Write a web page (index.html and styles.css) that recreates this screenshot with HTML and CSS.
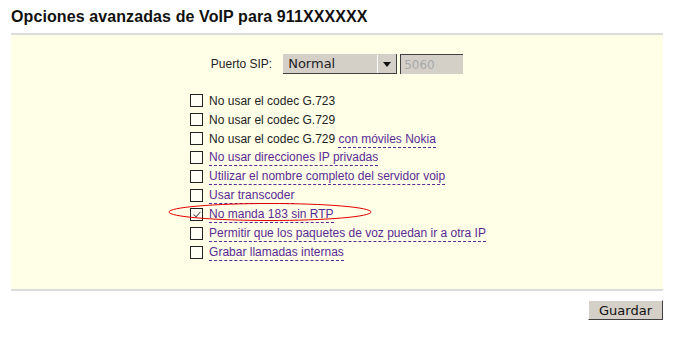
FILE: index.html
```html
<!DOCTYPE html>
<html lang="es">
<head>
    <meta charset="UTF-8">
    <title>Opciones avanzadas de VoIP</title>
    <link rel="stylesheet" href="styles.css">
</head>
<body>
    <h1>Opciones avanzadas de VoIP para 911XXXXXX</h1>

    <div class="panel">
        <div class="sip-row">
            <label for="sipPort">Puerto SIP:</label>
            <div class="select">
                <span class="select-value">Normal</span>
                <span class="select-arrow"></span>
            </div>
            <input type="text" id="sipPort" class="port-input" value="5060" disabled>
        </div>

        <div class="options-wrap">
            <ul class="options">
                <li><input type="checkbox" class="chk"><span>No usar el codec G.723</span></li>
                <li><input type="checkbox" class="chk"><span>No usar el codec G.729</span></li>
                <li><input type="checkbox" class="chk"><span>No usar el codec G.729 <a class="help">con móviles Nokia</a></span></li>
                <li><input type="checkbox" class="chk"><a class="help">No usar direcciones IP privadas</a></li>
                <li><input type="checkbox" class="chk"><a class="help">Utilizar el nombre completo del servidor voip</a></li>
                <li><input type="checkbox" class="chk"><a class="help">Usar transcoder</a></li>
                <li><input type="checkbox" class="chk" checked><a class="help">No manda 183 sin RTP</a></li>
                <li><input type="checkbox" class="chk"><a class="help">Permitir que los paquetes de voz puedan ir a otra IP</a></li>
                <li><input type="checkbox" class="chk"><a class="help">Grabar llamadas internas</a></li>
            </ul>
        </div>

        <svg class="mark" width="206" height="20" viewBox="0 0 206 20">
            <ellipse cx="103" cy="10" rx="101" ry="8.5" fill="none" stroke="#e00000" stroke-width="1"/>
        </svg>
    </div>

    <div class="actions">
        <button class="save-btn">Guardar</button>
    </div>
</body>
</html>
```

FILE: styles.css
```css
body {
    margin: 0;
    padding: 8px 0 0 11px;
    font-family: "Liberation Sans", Arial, sans-serif;
    font-size: 12px;
    color: #222;
    background-color: #fff;
}

h1 {
    margin: 0;
    font-size: 16px;
    font-weight: bold;
    color: #111;
    line-height: 18px;
    letter-spacing: 0.1px;
}

.panel {
    position: relative;
    width: 652px;
    margin-top: 7px;
    padding: 19px 0 27px;
    background-color: #ffffe8;
    border-top: 2px solid #dcdcdc;
    border-bottom: 2px solid #dcdcdc;
}

.sip-row {
    display: flex;
    align-items: center;
    justify-content: center;
    height: 20px;
}

.sip-row label {
    margin-right: 11px;
    font-size: 12px;
}

.select {
    display: flex;
    align-items: center;
    width: 114px;
    height: 20px;
    box-sizing: border-box;
    background-color: #d4d0c8;
    border-bottom: 1px solid #404040;
    border-right: 1px solid #404040;
    font-family: "DejaVu Sans", sans-serif;
    font-size: 13px;
    color: #222;
}

.select-value {
    flex: 1;
    padding-left: 5px;
}

.select-arrow {
    position: relative;
    width: 19px;
    height: 18px;
    border-left: 1px solid #fff;
    box-sizing: border-box;
}

.select-arrow::after {
    content: "";
    position: absolute;
    left: 5px;
    top: 7px;
    border-left: 4px solid transparent;
    border-right: 4px solid transparent;
    border-top: 5px solid #111;
}

.port-input {
    width: 63px;
    height: 20px;
    box-sizing: border-box;
    margin: 0 0 0 3px;
    padding: 0 3px;
    border: none;
    border-top: 1px solid #404040;
    border-left: 1px solid #404040;
    background-color: #d4d0c8;
    font-family: "DejaVu Sans", sans-serif;
    font-size: 12px;
    color: #a8a8a8;
}

.options-wrap {
    display: flex;
    justify-content: center;
    margin-top: 17px;
    padding-left: 2px;
}

.options {
    list-style: none;
    margin: 0;
    padding: 0;
}

.options li {
    display: flex;
    align-items: center;
    height: 19px;
}

.chk {
    appearance: none;
    -webkit-appearance: none;
    position: relative;
    width: 13px;
    height: 13px;
    margin: 0 6px 0 0;
    box-sizing: border-box;
    border: 1px solid #222;
    background-color: #fffff6;
}

.chk:checked::after {
    content: "";
    position: absolute;
    left: 4px;
    top: 1px;
    width: 3px;
    height: 6px;
    border-right: 1px solid #555;
    border-bottom: 1px solid #555;
    transform: rotate(40deg);
}

.help {
    color: #5a2a94;
    text-decoration: none;
    border-bottom: 1px dashed #5a2a94;
    padding-bottom: 1px;
}

.mark {
    position: absolute;
    left: 156px;
    top: 167px;
}

.actions {
    display: flex;
    justify-content: flex-end;
    width: 652px;
    margin-top: 9px;
}

.save-btn {
    height: 20px;
    width: 75px;
    padding: 0;
    font-family: "DejaVu Sans", sans-serif;
    font-size: 13px;
    color: #111;
    background-color: #d4d0c8;
    border: none;
    border-top: 1px solid #fff;
    border-left: 1px solid #fff;
    border-right: 1px solid #404040;
    border-bottom: 1px solid #404040;
}
```
